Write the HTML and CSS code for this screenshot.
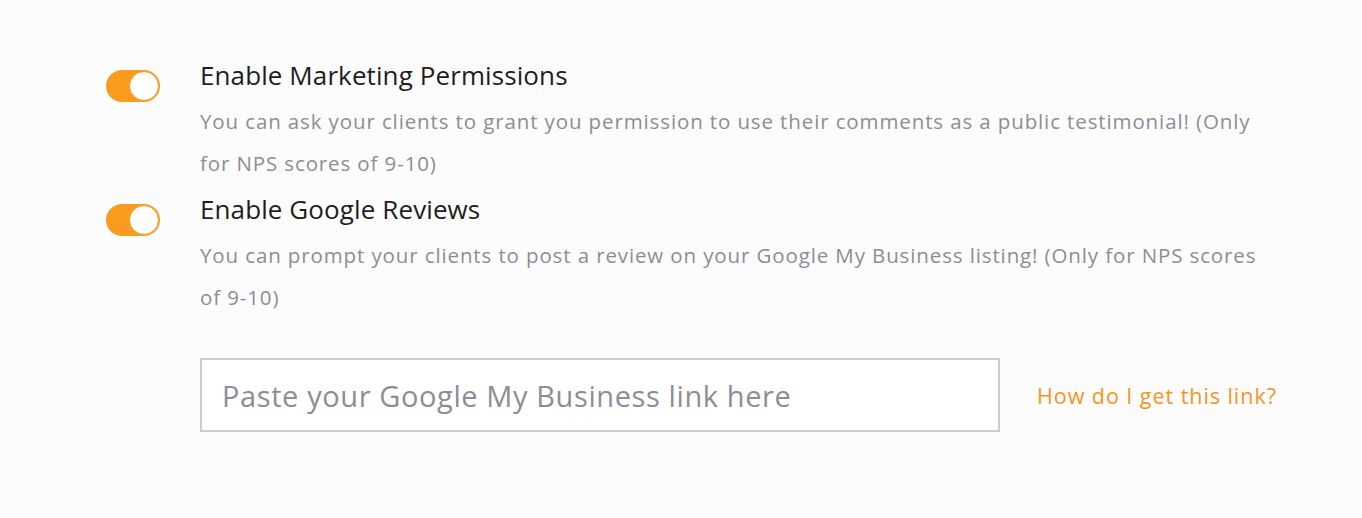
FILE: index.html
```html
<!DOCTYPE html>
<html>
<head>
<meta charset="utf-8">
<link rel="stylesheet" href="styles.css">
</head>
<body>
<div class="page">
  <div class="setting">
    <div class="toggle on"><span class="knob"></span></div>
    <div class="text">
      <div class="title">Enable Marketing Permissions</div>
      <div class="desc">You can ask your clients to grant you permission to use their comments as a public testimonial! (Only for NPS scores of 9-10)</div>
    </div>
  </div>
  <div class="setting">
    <div class="toggle on"><span class="knob"></span></div>
    <div class="text">
      <div class="title">Enable Google Reviews</div>
      <div class="desc">You can prompt your clients to post a review on your Google My Business listing! (Only for NPS scores of 9-10)</div>
    </div>
  </div>
  <div class="link-row">
    <input class="link-input" type="text" placeholder="Paste your Google My Business link here">
    <a class="help" href="#">How do I get this link?</a>
  </div>
</div>
</body>
</html>
```
FILE: styles.css
```css
html, body {
  margin: 0;
  padding: 0;
  background: #fcfcfc;
}
body {
  font-family: "Open Sans", "Noto Sans", sans-serif;
}
.page {
  padding: 60px 0 0 106px;
}
.setting {
  display: flex;
  gap: 40px;
  margin-bottom: 10px;
}
.toggle {
  flex: none;
  width: 54px;
  height: 32px;
  margin-top: 10px;
  border-radius: 16px;
  background: #fa9a1e;
  display: flex;
  justify-content: flex-end;
  align-items: center;
  box-sizing: border-box;
  padding: 1px;
}
.knob {
  width: 30px;
  height: 30px;
  border-radius: 50%;
  background: #fff;
  box-sizing: border-box;
  border: 1px solid #fa9a1e;
}
.text {
  width: 1076px;
}
.title {
  font-size: 26px;
  letter-spacing: 0.1px;
  line-height: 30px;
  color: #1e1e1e;
  margin-bottom: 10px;
}
.desc {
  font-size: 20.5px;
  letter-spacing: 0.88px;
  line-height: 42px;
  color: #8d8d96;
}
.link-row {
  display: flex;
  align-items: center;
  margin: 40px 0 0 94px;
  gap: 37px;
}
.link-input {
  width: 800px;
  height: 74px;
  box-sizing: border-box;
  border: 2px solid #c9ccd1;
  background: #fff;
  padding: 0 20px;
  font-family: "Open Sans", "Noto Sans", sans-serif;
  font-size: 29px;
  letter-spacing: 0.6px;
  color: #333;
  outline: none;
}
.link-input::placeholder {
  color: #8d8d96;
}
.help {
  font-size: 21.5px;
  letter-spacing: 0.95px;
  color: #f7941d;
  text-decoration: none;
}
```
